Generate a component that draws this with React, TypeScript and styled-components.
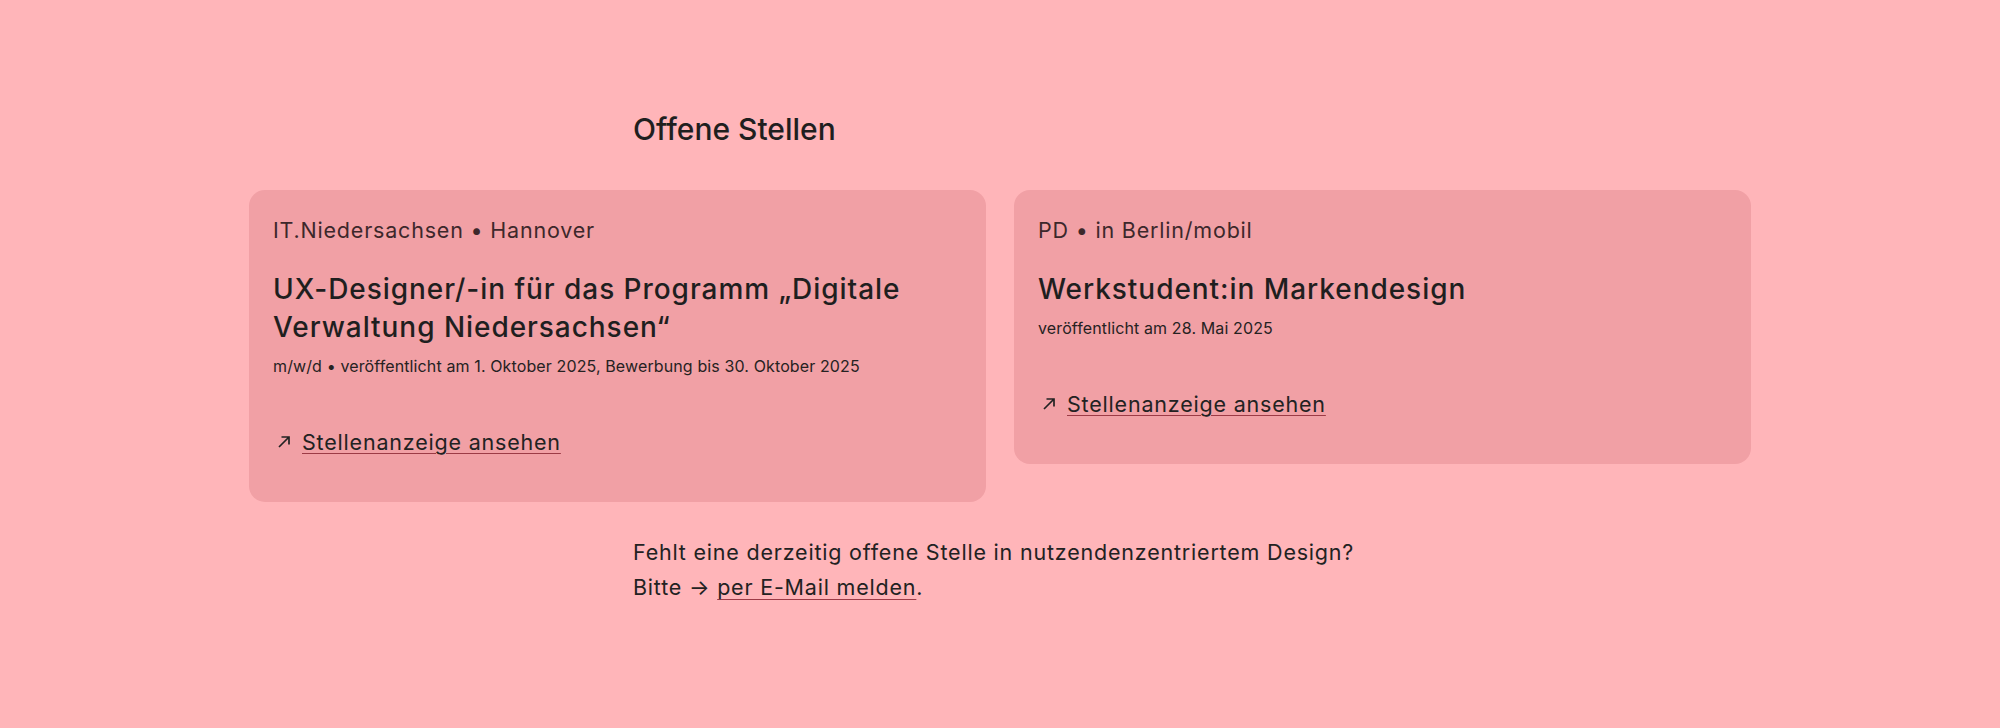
import { styled, createGlobalStyle } from 'styled-components';

const GlobalStyle = createGlobalStyle`
  html, body {
    margin: 0;
    padding: 0;
    background: #ffb5b9;
    min-height: 100%;
  }
  body {
    font-family: Inter, "Noto Sans", "Liberation Sans", sans-serif;
    color: #222222;
  }
  * {
    box-sizing: border-box;
  }
`;

type Job = {
  org: string;
  place: string;
  title: string;
  details: string;
};

const jobs: Job[] = [
  {
    org: 'IT.Niedersachsen',
    place: 'Hannover',
    title: 'UX-Designer/-in für das Programm „Digitale Verwaltung Niedersachsen“',
    details: 'm/w/d • veröffentlicht am 1. Oktober 2025, Bewerbung bis 30. Oktober 2025',
  },
  {
    org: 'PD',
    place: 'in Berlin/mobil',
    title: 'Werkstudent:in Markendesign',
    details: 'veröffentlicht am 28. Mai 2025',
  },
];

const ArrowUpRight = () => (
  <svg width="14" height="14" viewBox="0 0 14 14" fill="none">
    <path d="M2 12L12 2M4.5 2H12V9.5" stroke="#222222" strokeWidth="1.7" />
  </svg>
);

const App = () => {
  return (
    <>
      <GlobalStyle />
      <Page>
        <Column>
          <Heading>Offene Stellen</Heading>
        </Column>
        <CardGrid>
          {jobs.map((job) => (
            <Card key={job.title}>
              <Meta>
                {job.org} • {job.place}
              </Meta>
              <Title>{job.title}</Title>
              <Details>{job.details}</Details>
              <CardLink href="#">
                <ArrowUpRight />
                <LinkText>Stellenanzeige ansehen</LinkText>
              </CardLink>
            </Card>
          ))}
        </CardGrid>
        <Column>
          <Footer>
            Fehlt eine derzeitig offene Stelle in nutzendenzentriertem Design?
            <br />
            Bitte → <FooterLink href="#">per E-Mail melden</FooterLink>.
          </Footer>
        </Column>
      </Page>
    </>
  );
};

export default App;

const Page = styled.main`
  display: flex;
  flex-direction: column;
  align-items: center;
  padding-top: 111px;
  padding-bottom: 120px;
`;

const Column = styled.div`
  width: 734px;
`;

const Heading = styled.h2`
  margin: 0;
  font-size: 30px;
  line-height: 36px;
  font-weight: 500;
  color: #1f1f1f;
`;

const CardGrid = styled.div`
  width: 1502px;
  display: grid;
  grid-template-columns: 1fr 1fr;
  gap: 28px;
  align-items: start;
  margin-top: 43px;
`;

const Card = styled.article`
  background: #f1a0a5;
  border-radius: 16px;
  padding: 25px 24px 45px;
  display: flex;
  flex-direction: column;
  align-items: flex-start;
`;

const Meta = styled.p`
  margin: 0;
  font-size: 21.5px;
  line-height: 30px;
  letter-spacing: 0.8px;
  color: #3d282b;
`;

const Title = styled.h3`
  margin: 25px 0 0;
  font-size: 28px;
  line-height: 38px;
  letter-spacing: 0.95px;
  font-weight: 500;
  color: #1f1f1f;
`;

const Details = styled.p`
  margin: 8px 0 0;
  font-size: 16px;
  line-height: 24px;
  letter-spacing: 0.12px;
  color: #262222;
`;

const CardLink = styled.a`
  margin-top: 49px;
  display: flex;
  align-items: center;
  gap: 11px;
  padding-left: 4px;
  font-size: 21.5px;
  line-height: 30px;
  letter-spacing: 0.8px;
  color: #222222;
  text-decoration: none;
`;

const LinkText = styled.span`
  text-decoration: underline;
  text-decoration-color: #9c3b46;
  text-decoration-thickness: 1px;
  text-underline-offset: 3px;
`;

const Footer = styled.p`
  margin: 33px 0 0;
  font-size: 21.5px;
  line-height: 35px;
  letter-spacing: 0.8px;
  color: #222222;
`;

const FooterLink = styled.a`
  color: #222222;
  text-decoration: underline;
  text-decoration-color: #9c3b46;
  text-decoration-thickness: 1px;
  text-underline-offset: 4px;
`;
